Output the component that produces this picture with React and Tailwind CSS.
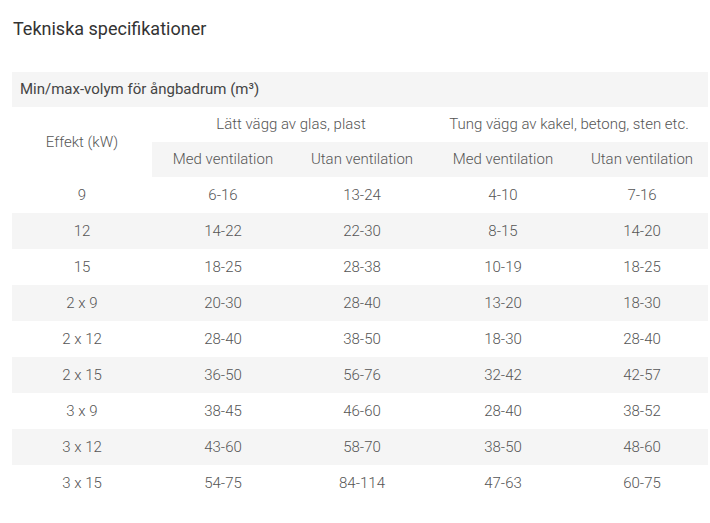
export default function App() {
  const rows = [
    ['9', '6-16', '13-24', '4-10', '7-16'],
    ['12', '14-22', '22-30', '8-15', '14-20'],
    ['15', '18-25', '28-38', '10-19', '18-25'],
    ['2 x 9', '20-30', '28-40', '13-20', '18-30'],
    ['2 x 12', '28-40', '38-50', '18-30', '28-40'],
    ['2 x 15', '36-50', '56-76', '32-42', '42-57'],
    ['3 x 9', '38-45', '46-60', '28-40', '38-52'],
    ['3 x 12', '43-60', '58-70', '38-50', '48-60'],
    ['3 x 15', '54-75', '84-114', '47-63', '60-75'],
  ];

  return (
    <div className="min-h-[523px] bg-white font-['Roboto',sans-serif] font-light text-[#555]">
      <div className="pl-[13px] pt-[18px]">
        <h2 className="text-[18px] leading-[22px] font-normal text-[#333]">Tekniska specifikationer</h2>
      </div>

      <table className="ml-[12px] mt-[32px] w-[696px] table-fixed border-collapse text-[15px]">
        <colgroup>
          <col className="w-[140px]" />
          <col className="w-[142px]" />
          <col className="w-[136px]" />
          <col className="w-[146px]" />
          <col className="w-[132px]" />
        </colgroup>
        <thead>
          <tr className="h-[35px] bg-[#f5f5f5]">
            <th colSpan={5} className="px-2 text-left font-normal text-[#444]">
              Min/max-volym för ångbadrum (m³)
            </th>
          </tr>
          <tr className="h-[35px]">
            <th rowSpan={2} className="font-light">Effekt (kW)</th>
            <th colSpan={2} className="font-light">Lätt vägg av glas, plast</th>
            <th colSpan={2} className="font-light">Tung vägg av kakel, betong, sten etc.</th>
          </tr>
          <tr className="h-[35px]">
            <th className="bg-[#f5f5f5] font-light">Med ventilation</th>
            <th className="bg-[#f5f5f5] font-light">Utan ventilation</th>
            <th className="bg-[#f5f5f5] font-light">Med ventilation</th>
            <th className="bg-[#f5f5f5] font-light">Utan ventilation</th>
          </tr>
        </thead>
        <tbody>
          {rows.map((row, i) => (
            <tr key={row[0]} className={`h-[36px] ${i % 2 === 1 ? 'bg-[#f5f5f5]' : ''}`}>
              {row.map((cell, j) => (
                <td key={j} className="text-center">{cell}</td>
              ))}
            </tr>
          ))}
        </tbody>
      </table>
    </div>
  );
}
